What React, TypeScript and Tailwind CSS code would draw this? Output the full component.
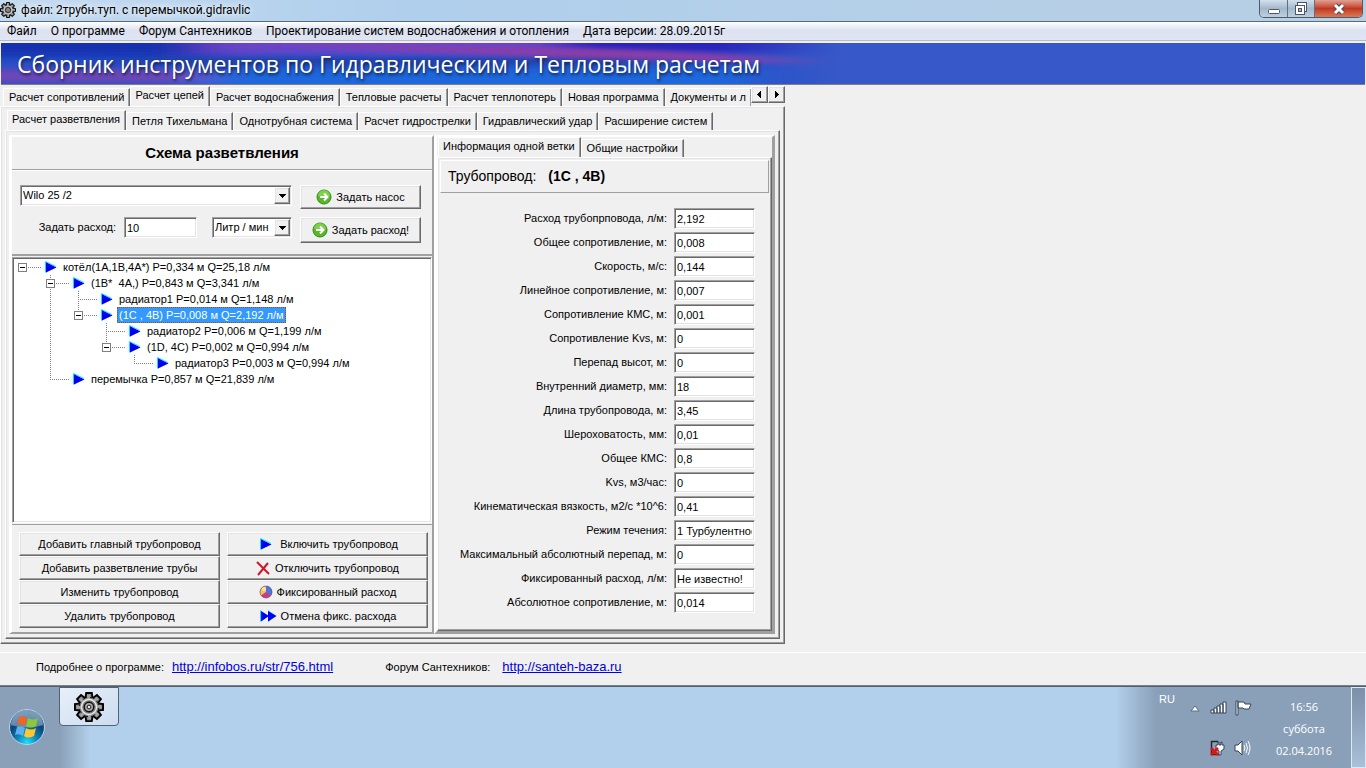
import type { ReactNode } from "react";
import clsx from "clsx";

const RAISED =
  "border border-t-white border-l-white border-r-[#696969] border-b-[#696969] shadow-[inset_-1px_-1px_0_#a0a0a0,inset_1px_1px_0_#e3e3e3] bg-[#f0f0f0]";
const SUNKEN =
  "border border-t-[#a0a0a0] border-l-[#a0a0a0] border-r-white border-b-white shadow-[inset_1px_1px_0_#696969,inset_-1px_-1px_0_#e3e3e3] bg-white";
const PAGE =
  "border border-t-white border-l-white border-r-[#696969] border-b-[#696969] shadow-[inset_-1px_-1px_0_#a0a0a0,inset_1px_1px_0_#e3e3e3]";

const mainTabs = [
  "Расчет сопротивлений",
  "Расчет цепей",
  "Расчет водоснабжения",
  "Тепловые расчеты",
  "Расчет теплопотерь",
  "Новая программа",
  "Документы и л",
];

const chainTabs = [
  "Расчет разветвления",
  "Петля Тихельмана",
  "Однотрубная система",
  "Расчет гидрострелки",
  "Гидравлический удар",
  "Расширение систем",
];

const fields: [string, string][] = [
  ["Расход трубопрповода, л/м:", "2,192"],
  ["Общее сопротивление, м:", "0,008"],
  ["Скорость, м/с:", "0,144"],
  ["Линейное сопротивление, м:", "0,007"],
  ["Сопротивление КМС, м:", "0,001"],
  ["Сопротивление Kvs, м:", "0"],
  ["Перепад высот, м:", "0"],
  ["Внутренний диаметр, мм:", "18"],
  ["Длина трубопровода, м:", "3,45"],
  ["Шероховатость, мм:", "0,01"],
  ["Общее КМС:", "0,8"],
  ["Kvs, м3/час:", "0"],
  ["Кинематическая вязкость, м2/с *10^6:", "0,41"],
  ["Режим течения:", "1 Турбулентное"],
  ["Максимальный абсолютный перепад, м:", "0"],
  ["Фиксированный расход, л/м:", "Не известно!"],
  ["Абсолютное сопротивление, м:", "0,014"],
];

type Cell = "blank" | "line" | "tee" | "end" | "root" | "boxTee" | "boxEnd";

const tree: { cells: Cell[]; text: string; selected?: boolean }[] = [
  { cells: ["root"], text: "котёл(1A,1B,4A*) P=0,334 м Q=25,18 л/м" },
  { cells: ["blank", "boxTee"], text: "(1B*  4A,) P=0,843 м Q=3,341 л/м" },
  { cells: ["blank", "line", "tee"], text: "радиатор1 P=0,014 м Q=1,148 л/м" },
  { cells: ["blank", "line", "boxEnd"], text: "(1C , 4B) P=0,008 м Q=2,192 л/м", selected: true },
  { cells: ["blank", "line", "blank", "tee"], text: "радиатор2 P=0,006 м Q=1,199 л/м" },
  { cells: ["blank", "line", "blank", "boxEnd"], text: "(1D, 4C) P=0,002 м Q=0,994 л/м" },
  { cells: ["blank", "line", "blank", "blank", "end"], text: "радиатор3 P=0,003 м Q=0,994 л/м" },
  { cells: ["blank", "end"], text: "перемычка P=0,857 м Q=21,839 л/м" },
];

function TreeCell({ kind }: { kind: Cell }) {
  const box = kind === "root" || kind === "boxTee" || kind === "boxEnd";
  const up = kind !== "blank" && kind !== "root";
  const down = kind === "line" || kind === "tee" || kind === "boxTee";
  const across = kind !== "blank" && kind !== "line";
  return (
    <svg width="28" height="16" className="shrink-0" shapeRendering="crispEdges" fill="none">
      {up && <path d="M8.5 0V8" stroke="#808080" strokeDasharray="1 1" />}
      {down && <path d="M8.5 8V16" stroke="#808080" strokeDasharray="1 1" />}
      {across && <path d="M8 8.5H28" stroke="#808080" strokeDasharray="1 1" />}
      {box && (
        <>
          <rect x="4.5" y="4.5" width="8" height="8" fill="#fff" stroke="#808080" />
          <path d="M6 8.5H11" stroke="#000" />
        </>
      )}
    </svg>
  );
}

function PlayIcon() {
  return (
    <svg width="19" height="16" className="shrink-0">
      <path d="M3 2.500V13.500H4.500L6 3.500Z" fill="#00e8ff" />
      <path d="M4 3V13.500L14.500 8.500Z" fill="#0000f0" />
      <path d="M3.500 2.500L14 7.500" stroke="#00e8ff" />
    </svg>
  );
}

function ForwardIcon() {
  return (
    <svg width="18" height="16" className="shrink-0">
      <path d="M1 2V14L9 8V14L17 8L9 2V8Z" fill="#00e8ff" />
      <path d="M2 3V13.500L10 8ZM9 3V13.500L17.500 8Z" fill="#0000f0" />
    </svg>
  );
}

function CrossIcon() {
  return (
    <svg width="15" height="15" className="shrink-0" fill="none" stroke="#d0182c" strokeWidth="2">
      <path d="M1 1L13 13M12 2L2 14" />
    </svg>
  );
}

function PieIcon() {
  return (
    <svg width="14" height="14" className="shrink-0">
      <circle cx="7" cy="7" r="6" fill="#c83c86" />
      <path d="M7 7L2 10.500A6 6 0 0 1 7 1Z" fill="#f0c460" />
      <path d="M7 7V1A6 6 0 0 1 12 10.500Z" fill="#4a78d8" />
      <circle cx="5" cy="4" r="2" fill="#fff" opacity=".5" />
      <circle cx="7" cy="7" r="6" fill="none" stroke="#704868" opacity=".6" />
    </svg>
  );
}

function GoIcon() {
  return (
    <svg width="16" height="16" className="shrink-0">
      <circle cx="8" cy="8" r="7" fill="#58b828" stroke="#2f8a18" />
      <path d="M2 7A6 6 0 0 1 14 7Q8 9 2 7Z" fill="#8fdc58" opacity=".7" />
      <path d="M4 8H11M8 4.500L11.500 8L8 11.500" fill="none" stroke="#fff" strokeWidth="2" />
    </svg>
  );
}

function GearIcon({ size }: { size: number }) {
  const teeth = [0, 45, 90, 135, 180, 225, 270, 315];
  return (
    <svg width={size} height={size} viewBox="0 0 32 32" className="shrink-0">
      {teeth.map((a) => (
        <path key={a} d="M12 8L13 1H19L20 8Z" fill="#8a8a8a" stroke="#000" strokeWidth="2" transform={`rotate(${a} 16 16)`} />
      ))}
      <circle cx="16" cy="16" r="10.500" fill="#8a8a8a" stroke="#111" strokeWidth="1" />
      {teeth.map((a) => (
        <path key={a} d="M14 9V3H17V9Z" fill="#a4a4a4" transform={`rotate(${a} 16 16)`} />
      ))}
      <circle cx="16" cy="16" r="8" fill="#777" stroke="#e8e8e8" strokeWidth="1.500" />
      <circle cx="16" cy="16" r="5" fill="#a8a8a8" stroke="#111" strokeWidth="1.500" />
      <circle cx="16" cy="16" r="2" fill="#e8e8e8" stroke="#111" />
    </svg>
  );
}

function StartOrb() {
  return (
    <svg width="38" height="38" viewBox="0 0 38 38">
      <defs>
        <radialGradient id="orb" cx="50%" cy="95%" r="85%">
          <stop offset="0" stopColor="#20e0ff" />
          <stop offset=".35" stopColor="#1084b8" />
          <stop offset=".7" stopColor="#0b4478" />
          <stop offset="1" stopColor="#3a6890" />
        </radialGradient>
      </defs>
      <circle cx="19" cy="19" r="17.500" fill="url(#orb)" stroke="#b8d4e8" />
      <path d="M3 17A16 15 0 0 1 35 17Q19 22 3 17Z" fill="#dceaf4" opacity=".4" />
      <path d="M11 9Q15 7 19 10L17 18Q13 15 9 17Z" fill="#f06428" />
      <path d="M20 10Q25 13 30 10L28 18Q23 21 18 18Z" fill="#8cc83c" />
      <path d="M9 19Q13 17 17 20L15 28Q11 25 7 27Z" fill="#5ab0f0" />
      <path d="M18 20Q23 23 28 20L26 28Q20 31 16 28Z" fill="#fcc830" />
    </svg>
  );
}

function Arrow({ d }: { d: string }) {
  return (
    <svg width="7" height="7" shapeRendering="crispEdges">
      <path d={d} fill="#000" />
    </svg>
  );
}

function Tabs({ items, active, className }: { items: string[]; active: number; className?: string }) {
  return (
    <div role="tablist" className={clsx("flex h-5 min-w-0 items-end overflow-hidden", className)}>
      {items.map((t, i) => (
        <button
          key={t}
          role="tab"
          aria-selected={i === active}
          className={clsx(
            "shrink-0 border-t border-r border-l border-t-white border-r-[#696969] border-l-white pr-[5px] whitespace-nowrap shadow-[inset_-1px_0_0_#a0a0a0]",
            i === active ? "h-5 pb-0.5 pl-1" : "h-[18px] pl-[5px]",
          )}
        >
          {t}
        </button>
      ))}
    </div>
  );
}

function Select({ value, label, className }: { value: string; label: string; className: string }) {
  return (
    <div className={clsx("relative flex h-[21px]", SUNKEN, className)}>
      <select aria-label={label} className="min-w-0 flex-1 appearance-none bg-transparent pl-0.5 outline-none">
        <option>{value}</option>
      </select>
      <span className={clsx("pointer-events-none absolute top-px right-px bottom-px grid w-4 place-items-center", RAISED)}>
        <Arrow d="M0 2H7L3.500 6Z" />
      </span>
    </div>
  );
}

function PushButton({ icon, children, className }: { icon?: ReactNode; children: ReactNode; className?: string }) {
  return (
    <button className={clsx("flex items-center justify-center gap-1 whitespace-nowrap", RAISED, className)}>
      {icon}
      {children}
    </button>
  );
}

function TitleBar() {
  return (
    <header className="flex h-[22px] items-start border-b border-[#566a80] bg-linear-to-r from-[#c3daf0] via-[#b0cfec] via-30% to-[#b8cfe4] font-[Roboto,sans-serif] text-[12px]">
      <h1 className="flex h-5 flex-1 items-center gap-[5px] leading-5 [text-shadow:0_0_6px_#fff,0_0_10px_#fff]">
        <GearIcon size={16} />
        файл: 2трубн.туп. с перемычкой.gidravlic
      </h1>
      <div className="mr-[3px] flex h-[18px] overflow-hidden rounded-b-[5px] border border-t-0 border-[#4c5b6c]">
        <button aria-label="Свернуть" className="grid w-7 place-items-center border-r border-[#5f7084] bg-linear-to-b from-[#d3e0ec] via-[#a4b8cc] via-50% to-[#bccfe0]">
          <svg width="14" height="16">
            <rect x="1.500" y="8.500" width="11" height="4" rx="1" fill="#fff" stroke="#4a5568" />
          </svg>
        </button>
        <button aria-label="Восстановить" className="grid w-[27px] place-items-center border-r border-[#5f7084] bg-linear-to-b from-[#d3e0ec] via-[#a4b8cc] via-50% to-[#bccfe0]">
          <svg width="14" height="14" fill="#fff" stroke="#4a5568">
            <rect x="3.500" y=".5" width="9" height="9" />
            <rect x="1.500" y="3.500" width="9" height="9" />
            <rect x="4.500" y="6.500" width="3" height="3" fill="#a8b8cc" />
          </svg>
        </button>
        <button aria-label="Закрыть" className="grid w-[47px] place-items-center bg-linear-to-b from-[#e0a094] via-[#c03820] via-50% to-[#d87858]">
          <svg width="14" height="14" fill="none">
            <path d="M3 3L11 11M11 3L3 11" stroke="#4a4a58" strokeWidth="5" />
            <path d="M3 3L11 11M11 3L3 11" stroke="#fff" strokeWidth="3" />
          </svg>
        </button>
      </div>
    </header>
  );
}

function MenuBar() {
  const items = ["Файл", "О программе", "Форум Сантехников", "Проектирование систем водоснабжения и отопления", "Дата версии: 28.09.2015г"];
  return (
    <nav className="flex h-[19px] items-center gap-[14px] border-b border-[#b4bccc] bg-linear-to-b from-white via-[#dce2f0] via-45% to-[#dfe5f3] px-[7px] font-[Roboto,sans-serif] text-[12px]">
      {items.map((m) => (
        <button key={m} className="whitespace-nowrap">
          {m}
        </button>
      ))}
    </nav>
  );
}

function Banner() {
  return (
    <div className="relative mt-0.5 mr-px ml-px h-[42px] overflow-hidden border-b border-[#808080] bg-[#3758c8]">
      <svg className="absolute inset-0" width="900" height="42" preserveAspectRatio="none">
        <defs>
          <linearGradient id="fade">
            <stop offset="0" stopColor="#fff" />
            <stop offset=".8" stopColor="#fff" />
            <stop offset=".93" stopColor="#000" />
          </linearGradient>
          <mask id="edge">
            <rect width="900" height="42" fill="url(#fade)" />
          </mask>
          <filter id="soft" x="-20%" y="-100%" width="140%" height="300%">
            <feGaussianBlur stdDeviation="24 4" />
          </filter>
          <filter id="streak" x="-20%" y="-100%" width="140%" height="300%">
            <feGaussianBlur stdDeviation="30 2" />
          </filter>
        </defs>
        <g mask="url(#edge)">
          <rect width="900" height="42" fill="#2450c8" />
          <g filter="url(#soft)">
            <rect x="-80" y="-10" width="320" height="24" fill="#1830b0" />
            <rect x="200" y="-10" width="380" height="22" fill="#6a44c8" />
            <rect x="560" y="-12" width="280" height="22" fill="#2c20bc" />
            <rect x="-80" y="27" width="300" height="12" fill="#7a44b4" />
            <rect x="200" y="26" width="560" height="24" fill="#1c68dc" />
          </g>
          <g filter="url(#streak)">
            <polygon points="280,2 620,6 860,18 820,22 560,14" fill="#8c3ca8" />
            <rect x="120" y="15" width="520" height="6" fill="#1c3c98" opacity=".7" />
          </g>
        </g>
      </svg>
      <h2 className="relative pl-4 font-['Open_Sans',sans-serif] text-[23px] leading-[42px] whitespace-nowrap text-white [text-shadow:1px_2px_3px_#102050]">
        Сборник инструментов по Гидравлическим и Тепловым расчетам
      </h2>
    </div>
  );
}

function SchemePanel() {
  return (
    <section className="flex w-[425px] flex-col border-t-2 border-r-2 border-b-2 border-l-3 border-t-white border-l-white border-r-[#a0a0a0] border-b-[#a0a0a0]">
      <h3 className="h-[33px] border-b border-[#a0a0a0] text-center text-[15px] leading-8 font-bold">Схема разветвления</h3>
      <div className="flex h-[86px] flex-col gap-2 border-t border-b-2 border-t-white border-b-[#a0a0a0] pt-[14px] pr-[11px] pl-2">
        <div className="flex justify-between">
          <Select label="Насос" value="Wilo 25 /2" className="w-[272px]" />
          <PushButton icon={<GoIcon />} className="h-6 w-[121px]">
            Задать насос
          </PushButton>
        </div>
        <div className="flex items-start">
          <label htmlFor="flow" className="w-[104px] pr-2 text-right leading-5">
            Задать расход:
          </label>
          <input id="flow" defaultValue="10" className={clsx("h-[21px] w-[73px] px-0.5 outline-none", SUNKEN)} />
          <Select label="Единица расхода" value="Литр / мин" className="ml-[15px] w-20" />
          <PushButton icon={<GoIcon />} className="ml-auto h-[26px] w-[121px]">
            Задать расход!
          </PushButton>
        </div>
      </div>
      <ul className={clsx("mt-px min-h-[262px] flex-1 p-px", SUNKEN)}>
        {tree.map((n) => (
          <li key={n.text} className="flex h-4 items-center">
            {n.cells.map((c, i) => (
              <TreeCell key={i} kind={c} />
            ))}
            <PlayIcon />
            <span
              className={clsx(
                "px-0.5 leading-4 whitespace-pre",
                n.selected && "bg-[#3399ff] text-white outline-1 -outline-offset-1 outline-dotted outline-[#a05010]",
              )}
            >
              {n.text}
            </span>
          </li>
        ))}
      </ul>
      <div className="mt-px grid grid-cols-2 gap-[7px] border-t border-[#a0a0a0] pt-[7px] pr-1 pb-1 pl-[7px]">
        <div className="flex flex-col">
          {["Добавить главный трубопровод", "Добавить разветвление трубы", "Изменить трубопровод", "Удалить трубопровод"].map((t) => (
            <PushButton key={t} className="h-6">
              {t}
            </PushButton>
          ))}
        </div>
        <div className="flex flex-col">
          <PushButton icon={<PlayIcon />} className="h-6">Включить трубопровод</PushButton>
          <PushButton icon={<CrossIcon />} className="h-6">Отключить трубопровод</PushButton>
          <PushButton icon={<PieIcon />} className="h-6">Фиксированный расход</PushButton>
          <PushButton icon={<ForwardIcon />} className="h-6">Отмена фикс. расхода</PushButton>
        </div>
      </div>
    </section>
  );
}

function BranchPanel() {
  return (
    <section className="flex min-w-0 flex-1 flex-col border-t-2 border-r-3 border-b-3 border-l-3 border-t-white border-r-[#a0a0a0] border-b-[#a0a0a0] border-l-white">
      <Tabs items={["Информация одной ветки", "Общие настройки"]} active={0} className="pl-px" />
      <div className={clsx("flex-1 px-0.5 pt-0.5", PAGE)}>
        <div className="flex h-[33px] items-center gap-3 border border-t-white border-r-[#a0a0a0] border-b-[#a0a0a0] border-l-white px-[7px] text-[14px]">
          <span>Трубопровод:</span>
          <b>(1C , 4B)</b>
        </div>
        <div className="mt-[15px] flex flex-col gap-[3px] pr-[14px] pb-4">
          {fields.map(([label, value], i) => (
            <div key={label} className="flex justify-end">
              <label htmlFor={`f${i}`} className="pr-[7px] leading-5 whitespace-nowrap">
                {label}
              </label>
              <input id={`f${i}`} defaultValue={value} className={clsx("h-[21px] w-[81px] px-0.5 outline-none", SUNKEN)} />
            </div>
          ))}
        </div>
      </div>
    </section>
  );
}

function Taskbar() {
  return (
    <footer className="flex h-[82px] items-start border-t border-[#4c6078] bg-[#b2cfeb] bg-[linear-gradient(90deg,#8aa0b8_0,#8aa0b8_60px,transparent_90px,transparent_calc(100%-250px),#8aa0b8_calc(100%-210px))] font-['Open_Sans',sans-serif] text-[11px] text-white">
      <button aria-label="Пуск" className="mt-[21px] ml-2">
        <StartOrb />
      </button>
      <button aria-label="Gidravlic" className="ml-[13px] grid h-[39px] w-[60px] place-items-center rounded-b-sm border border-[#506478] bg-linear-to-br from-[#e8f0f8] to-[#ccdcf0]">
        <GearIcon size={30} />
      </button>
      <div className="ml-auto flex h-full">
        <span className="pt-1 font-['Liberation_Sans',sans-serif]">RU</span>
        <svg width="76" height="81" className="ml-3">
          <path d="M4 24L8 19L12 24Z" fill="#fff" stroke="#5a6c82" strokeWidth="1" />
          <g fill="#fff" stroke="#344458" strokeWidth="1">
            <path d="M24 23H27V26H24ZM27 21H30V26H27ZM30 19H33V26H30ZM33 17H36V26H33ZM36 15H39V26H36Z" />
            <path d="M49 14H51V28H49ZM51 15H57L58 17H64L62 22H57L56 21H51Z" />
            <path d="M48 58H51L55 54V68L51 64H48Z" />
            <path d="M31 55V58H29V62L32 64V68H34V64L37 62V58H35V55H34V58H32V55Z" />
          </g>
          <path d="M31 54.500H24.500V67.500H32" fill="none" stroke="#202830" strokeWidth="1.500" />
          <path d="M24 61L31 68M31 61L24 68" stroke="#e81010" strokeWidth="2.500" />
          <path d="M57 58Q59 61 57 64M59 56Q62 61 59 66M61 54Q65 61 61 68" fill="none" stroke="#fff" />
        </svg>
        <div className="w-[82px] pt-[9px] text-center leading-[22px]">
          16:56
          <br />
          суббота
          <br />
          02.04.2016
        </div>
        <button aria-label="Свернуть все окна" className="ml-1.5 w-[15px] border border-[#dce8f4] bg-linear-to-b from-[#7c90a8] to-[#a8c0d8]" />
      </div>
    </footer>
  );
}

export default function App() {
  return (
    <div className="flex min-h-screen flex-col bg-[#f0f0f0] font-['Liberation_Sans',sans-serif] text-[11px] text-black">
      <TitleBar />
      <MenuBar />
      <Banner />
      <main className="flex flex-1 flex-col">
        <div className="flex w-full max-w-[785px] flex-1 flex-col pt-px">
          <div className="flex items-start pl-[3px]">
            <Tabs items={mainTabs} active={1} className="flex-1" />
            <div className="flex">
              <PushButton className="h-[17px] w-[17px]">
                <Arrow d="M5 0V7L1 3.500Z" />
              </PushButton>
              <PushButton className="h-[17px] w-[17px]">
                <Arrow d="M2 0V7L6 3.500Z" />
              </PushButton>
            </div>
          </div>
          <div className={clsx("flex flex-1 flex-col px-1 pt-[3px] pb-1", PAGE)}>
            <Tabs items={chainTabs} active={0} className="pl-0.5" />
            <div className={clsx("flex flex-1 py-1 pr-1 pl-[3px]", PAGE)}>
              <SchemePanel />
              <BranchPanel />
            </div>
          </div>
        </div>
        <div className="mt-2 flex h-[34px] items-center border-t border-b border-t-white border-b-[#808080] pb-1 pl-9">
          <span>Подробнее о программе:</span>
          <a href="http://infobos.ru/str/756.html" className="ml-2 text-[13px] text-[#0000e0] underline">
            http://infobos.ru/str/756.html
          </a>
          <span className="ml-[52px]">Форум Сантехников:</span>
          <a href="http://santeh-baza.ru" className="ml-3 text-[13px] text-[#0000e0] underline">
            http://santeh-baza.ru
          </a>
        </div>
      </main>
      <Taskbar />
    </div>
  );
}
